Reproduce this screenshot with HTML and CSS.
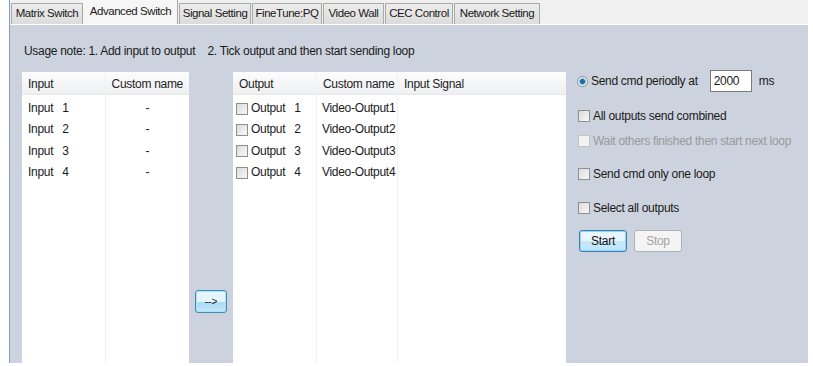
FILE: index.html
```html
<!DOCTYPE html>
<html lang="en">

    <head>
        <meta charset="UTF-8">
        <meta name="viewport" content="width=device-width, initial-scale=1.0">
        <title>Advanced Switch</title>
        <link rel="stylesheet" href="styles.css">
    </head>

    <body>
        <div class="window">
            <div class="tabs">
                <div class="tab">Matrix Switch</div>
                <div class="tab active">Advanced Switch</div>
                <div class="tab">Signal Setting</div>
                <div class="tab">FineTune:PQ</div>
                <div class="tab">Video Wall</div>
                <div class="tab">CEC Control</div>
                <div class="tab">Network Setting</div>
            </div>

            <div class="panel">
                <p class="note">Usage note: 1. Add input to output&nbsp;&nbsp;&nbsp; 2. Tick output and then start sending loop</p>

                <div class="work">
                    <div class="list inputs">
                        <div class="col col-a">
                            <div class="head">Input</div>
                            <div class="row">Input&nbsp;&nbsp; 1</div>
                            <div class="row">Input&nbsp;&nbsp; 2</div>
                            <div class="row">Input&nbsp;&nbsp; 3</div>
                            <div class="row">Input&nbsp;&nbsp; 4</div>
                        </div>
                        <div class="col col-b center">
                            <div class="head">Custom name</div>
                            <div class="row">-</div>
                            <div class="row">-</div>
                            <div class="row">-</div>
                            <div class="row">-</div>
                        </div>
                    </div>

                    <div class="arrow-col">
                        <button class="btn arrow">--&gt;</button>
                    </div>

                    <div class="list outputs">
                        <div class="col col-c">
                            <div class="head">Output</div>
                            <div class="row"><span class="box"></span>Output&nbsp;&nbsp; 1</div>
                            <div class="row"><span class="box"></span>Output&nbsp;&nbsp; 2</div>
                            <div class="row"><span class="box"></span>Output&nbsp;&nbsp; 3</div>
                            <div class="row"><span class="box"></span>Output&nbsp;&nbsp; 4</div>
                        </div>
                        <div class="col col-d">
                            <div class="head right">Custom name</div>
                            <div class="row">Video-Output1</div>
                            <div class="row">Video-Output2</div>
                            <div class="row">Video-Output3</div>
                            <div class="row">Video-Output4</div>
                        </div>
                        <div class="col col-e">
                            <div class="head">Input Signal</div>
                        </div>
                    </div>

                    <div class="controls">
                        <div class="opt period">
                            <span class="radio"></span>
                            <span>Send cmd periodly at</span>
                            <span class="field">2000</span>
                            <span>ms</span>
                        </div>
                        <div class="opt combined"><span class="box"></span>All outputs send combined</div>
                        <div class="opt wait disabled"><span class="box"></span>Wait others finished then start next loop</div>
                        <div class="opt once"><span class="box"></span>Send cmd only one loop</div>
                        <div class="opt all"><span class="box"></span>Select all outputs</div>
                        <div class="buttons">
                            <button class="btn start">Start</button>
                            <button class="btn stop">Stop</button>
                        </div>
                    </div>
                </div>
            </div>
        </div>
    </body>

</html>
```

FILE: styles.css
```css
:root {
    --panel-bg: #cdd3de;
    --strip-bg: #f0f0f0;
    --text: #1a1a1a;
    --line: #f2f2f2;
}

* {
    box-sizing: border-box;
}

body {
    margin: 0;
    background: #fff;
    color: var(--text);
    font-family: 'Liberation Sans', Arial, sans-serif;
    font-size: 12px;
    letter-spacing: -0.3px;
    overflow: hidden;
}

.window {
    margin-left: 9px;
    width: 799px;
    height: 363px;
    border-left: 1px solid #7d9fc7;
    display: flex;
    flex-direction: column;
}

/* tab strip */
.tabs {
    height: 25px;
    background: var(--strip-bg);
    display: flex;
    align-items: flex-end;
    padding-left: 1px;
    border-bottom: 1px solid #fff;
}

.tab {
    height: 21px;
    line-height: 19px;
    text-align: center;
    font-size: 11.5px;
    letter-spacing: -0.45px;
    background: linear-gradient(#ececec, #dcdcdc);
    border: 1px solid #a9a9a9;
    border-bottom: none;
    margin-right: 1px;
    white-space: nowrap;
    overflow: hidden;
}

.tab:nth-child(1) { width: 72px; margin-right: 0; }
.tab:nth-child(2) { width: 95px; }
.tab:nth-child(3) { width: 72px; }
.tab:nth-child(4) { width: 70px; }
.tab:nth-child(5) { width: 61px; }
.tab:nth-child(6) { width: 68px; }
.tab:nth-child(7) { width: 86px; }

.tab.active {
    height: 25px;
    line-height: 22px;
    background: #f6f6f6;
    border-color: #f6f6f6;
    border-right-color: #a9a9a9;
}

/* main panel */
.panel {
    flex: 1;
    background: var(--panel-bg);
    overflow: hidden;
    padding: 0 0 0 12px;
}

.note {
    margin: 18px 0 0 2px;
    height: 29px;
    line-height: 16px;
}

.work {
    display: flex;
    height: 300px;
}

.list {
    background: #fff;
    display: flex;
    height: 100%;
}

.inputs {
    width: 167px;
}

.outputs {
    width: 333px;
}

.col {
    height: 100%;
    border-right: 1px solid var(--line);
}

.col:last-child {
    border-right: none;
}

.col-a {
    width: 85px;
}

.col-b {
    flex: 1;
}

.col-c {
    width: 84px;
}

.col-d {
    width: 81px;
}

.col-e {
    flex: 1;
}

.head {
    height: 23px;
    line-height: 24px;
    padding: 0 6px;
    background: linear-gradient(#fdfdfd, #eeeff1);
    border-bottom: 1px solid #e8e8e8;
    white-space: nowrap;
    color: #222;
}

.col-b .head {
    text-align: center;
}

.head.right {
    text-align: right;
    padding-right: 4px;
}

.row {
    height: 21.3px;
    line-height: 21px;
    padding: 0 6px;
    white-space: nowrap;
    display: flex;
    align-items: center;
}

.row:nth-child(2) {
    margin-top: 3px;
}

.center .row {
    justify-content: center;
}

.col-c .row {
    padding-left: 3px;
}

.col-d .row {
    padding-left: 5px;
}

.box {
    display: inline-block;
    width: 12px;
    height: 12px;
    border: 1px solid #8e8f8f;
    background: linear-gradient(135deg, #dcdcdc, #f8f8f8);
    margin-right: 3px;
    flex: none;
}

.arrow-col {
    width: 44px;
    padding: 218px 0 0 6px;
}

/* buttons */
.btn {
    font: inherit;
    letter-spacing: -0.3px;
    border-radius: 3px;
    padding: 0;
    color: #111;
}

.arrow {
    width: 32px;
    height: 23px;
    font-size: 10px;
    letter-spacing: 0;
    border: 1px solid #3c8db6;
    background: linear-gradient(#e6f5fc 50%, #a9dbf4 51%, #c4e7f8);
    box-shadow: inset 0 0 0 1px #aee0f6;
}

.controls {
    padding: 0 0 0 12px;
    flex: 1;
}

.opt {
    display: flex;
    align-items: center;
    white-space: nowrap;
}

.opt .box {
    margin-right: 3px;
}

.period {
    height: 22px;
    margin-top: -2px;
}

.radio {
    width: 11px;
    height: 11px;
    border-radius: 50%;
    border: 1px solid #8e8f8f;
    background: radial-gradient(circle, #1a6fa8 0 2px, #6fb7e0 3px, #eef3f6 3.5px);
    margin: 0 3px 0 -1px;
    flex: none;
}

.field {
    width: 42px;
    height: 22px;
    line-height: 20px;
    border: 1px solid #7a7a7a;
    background: #fff;
    padding-left: 3px;
    margin: 0 7px 0 12px;
}

.combined {
    margin-top: 17px;
}

.wait {
    margin-top: 11px;
}

.once {
    margin-top: 19px;
}

.all {
    margin-top: 20px;
}

.disabled {
    color: #9a9a9a;
}

.disabled .box {
    border-color: #c4c4c4;
    background: #f2f2f2;
}

.buttons {
    display: flex;
    gap: 7px;
    margin-top: 15px;
    padding-left: 1px;
}

.start,
.stop {
    width: 48px;
    height: 22px;
}

.start {
    border: 1px solid #3c7fb1;
    background: linear-gradient(#eaf6fd 50%, #c8e7f9 51%, #bee6fd);
    box-shadow: inset 0 0 0 1px #92d6f7;
}

.stop {
    border: 1px solid #adb2b5;
    background: #f4f4f4;
    color: #a3a3a3;
}
```
